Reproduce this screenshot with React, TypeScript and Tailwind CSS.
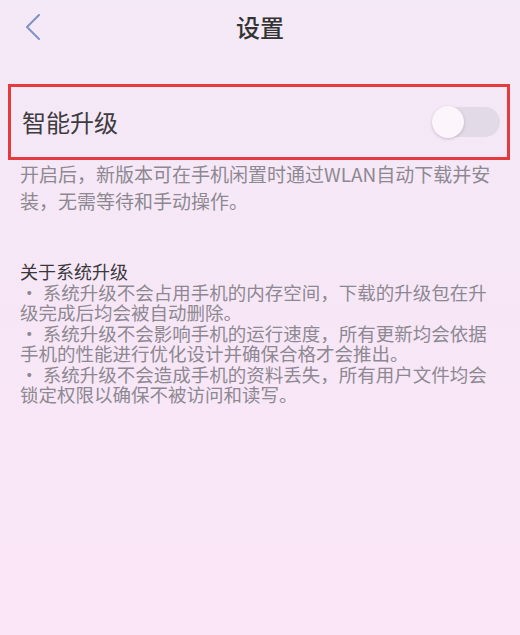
import React from "react";

const font = { fontFamily: '"Noto Sans CJK SC", "Noto Sans", sans-serif' };

const bullets = [
  ["• 系统升级不会占用手机的内存空间，下载的升级包在升", "级完成后均会被自动删除。"],
  ["• 系统升级不会影响手机的运行速度，所有更新均会依据", "手机的性能进行优化设计并确保合格才会推出。"],
  ["• 系统升级不会造成手机的资料丢失，所有用户文件均会", "锁定权限以确保不被访问和读写。"],
];

function Toggle() {
  return (
    <div className="flex h-[30px] w-[68px] items-center rounded-full bg-[#e2dae6]">
      <span className="h-[32px] w-[32px] rounded-full bg-[#fcf5fc] shadow-[0_1px_3px_rgba(120,100,130,0.35)]" />
    </div>
  );
}

export default function App() {
  return (
    <div
      className="flex h-[635px] w-[520px] flex-col bg-gradient-to-b from-[#f4e9f6] via-[#f7e7f6] to-[#fbe6f7]"
      style={font}
    >
      {/* header */}
      <header className="grid h-[54px] grid-cols-[1fr_auto_1fr] items-center">
        <div className="pl-[25px]">
          <svg width="16" height="26" viewBox="0 0 16 26" fill="none">
            <polyline
              points="14,1 2,13 14,25"
              stroke="#7f93c8"
              strokeWidth="2"
              strokeLinecap="round"
              strokeLinejoin="round"
            />
          </svg>
        </div>
        <h1 className="text-[24px] leading-none font-medium text-[#333]">设置</h1>
        <div />
      </header>

      {/* smart upgrade row */}
      <div className="mx-[8px] mt-[30px] flex h-[76px] w-[502px] items-center justify-between border-[3px] border-[#e53a3e] pr-[7px] pl-[11px]">
        <span className="text-[24px] text-[#3d3b40]">智能升级</span>
        <Toggle />
      </div>

      <p className="px-[20px] text-[19px] leading-[27px] whitespace-nowrap text-[#8d8892]">
        开启后，新版本可在手机闲置时通过WLAN自动下载并安
        <br />
        装，无需等待和手动操作。
      </p>

      <section className="mt-[47px] px-[20px]">
        <h2 className="text-[18px] leading-[20.5px] text-[#3a383c]">关于系统升级</h2>
        {bullets.map((b, i) => (
          <p
            key={i}
            className="text-[18.5px] leading-[20.5px] whitespace-nowrap text-[#8d8892]"
          >
            {b[0]}
            <br />
            {b[1]}
          </p>
        ))}
      </section>
    </div>
  );
}
